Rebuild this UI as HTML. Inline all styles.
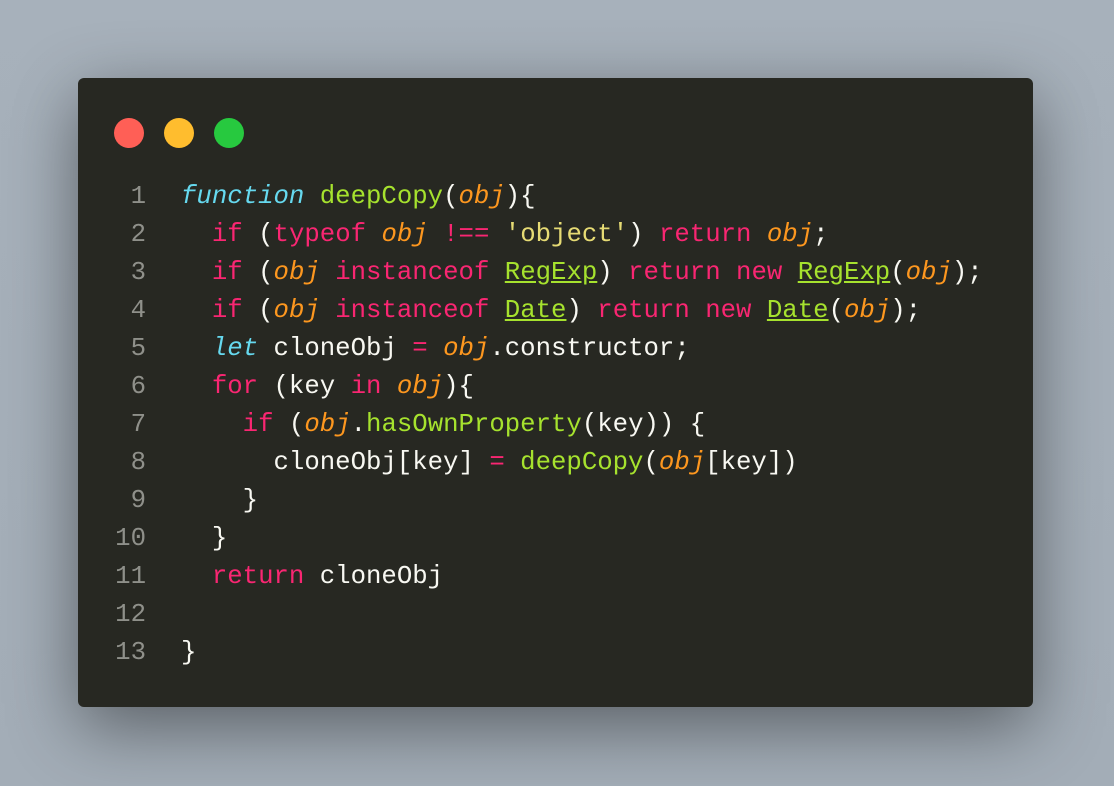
<!DOCTYPE html>
<html><head><meta charset="utf-8"><style>
html,body{margin:0;width:1114px;height:786px;overflow:hidden;background:linear-gradient(180deg,#a7b1bb,#a3adb7);}
.win{position:absolute;left:78px;top:78px;width:955px;height:629px;background:#272822;border-radius:6px;box-shadow:0 20px 70px rgba(0,0,0,.45);}
.dot{position:absolute;top:40px;width:30px;height:30px;border-radius:50%;}
.code{position:absolute;left:0;top:100px;font-family:"Liberation Mono",monospace;font-size:25.7px;line-height:38px;color:#f8f8f2;white-space:pre;}
.ln{display:inline-block;width:68px;text-align:right;color:#8f908a;margin-right:35px;}
.k{color:#f92672}.f{color:#a6e22e}.p{color:#fd971f;font-style:italic}.s{color:#66d9ef;font-style:italic}.str{color:#e6db74}.u{color:#a6e22e;text-decoration:underline}
</style></head><body>
<div class="win">
<div class="dot" style="left:36px;background:#ff5f56"></div>
<div class="dot" style="left:86px;background:#ffbd2e"></div>
<div class="dot" style="left:136px;background:#27c93f"></div>
<div class="code"><span class="ln">1</span><span class="s">function</span> <span class="f">deepCopy</span>(<span class="p">obj</span>){
<span class="ln">2</span>  <span class="k">if</span> (<span class="k">typeof</span> <span class="p">obj</span> <span class="k">!==</span> <span class="str">'object'</span>) <span class="k">return</span> <span class="p">obj</span>;
<span class="ln">3</span>  <span class="k">if</span> (<span class="p">obj</span> <span class="k">instanceof</span> <span class="u">RegExp</span>) <span class="k">return</span> <span class="k">new</span> <span class="u">RegExp</span>(<span class="p">obj</span>);
<span class="ln">4</span>  <span class="k">if</span> (<span class="p">obj</span> <span class="k">instanceof</span> <span class="u">Date</span>) <span class="k">return</span> <span class="k">new</span> <span class="u">Date</span>(<span class="p">obj</span>);
<span class="ln">5</span>  <span class="s">let</span> cloneObj <span class="k">=</span> <span class="p">obj</span>.constructor;
<span class="ln">6</span>  <span class="k">for</span> (key <span class="k">in</span> <span class="p">obj</span>){
<span class="ln">7</span>    <span class="k">if</span> (<span class="p">obj</span>.<span class="f">hasOwnProperty</span>(key)) {
<span class="ln">8</span>      cloneObj[key] <span class="k">=</span> <span class="f">deepCopy</span>(<span class="p">obj</span>[key])
<span class="ln">9</span>    }
<span class="ln">10</span>  }
<span class="ln">11</span>  <span class="k">return</span> cloneObj
<span class="ln">12</span>
<span class="ln">13</span>}</div>
</div>
</body></html>
